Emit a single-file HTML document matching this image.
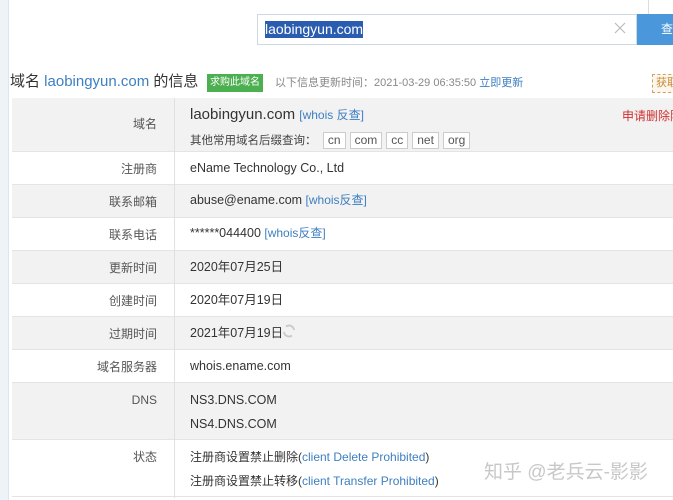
<!DOCTYPE html>
<html><head><meta charset="utf-8"><style>
*{margin:0;padding:0;box-sizing:border-box}
body{width:673px;height:500px;overflow:hidden;background:#fff;font-family:"Liberation Sans","Noto Sans CJK SC",sans-serif;position:relative;color:#333}
.a{position:absolute;white-space:nowrap}
span{line-height:16px}
.lnk{color:#3d7fc1}
.row{position:absolute;left:12px;width:661px;border-bottom:1px solid #e4e4e4}
.g{background:#f2f2f2}
.lab{position:absolute;right:516px;font-size:12px;color:#555}
.val{position:absolute;left:178px;font-size:12.5px;color:#333}
.sep{position:absolute;left:174px;top:98px;width:1px;height:400px;background:#e0e0e0}
.tag{display:inline-block;border:1px solid #ccc;background:#fff;padding:0 4px;height:17px;line-height:15px;margin-right:4px;font-size:12px;color:#555}
</style></head><body>
<div class="a" style="left:0;top:0;width:9px;height:500px;background:#eef3f8;border-right:1px solid #dde5ee"></div>
<div class="a" style="left:648px;top:0;width:30px;height:16px;border:1px solid #ddd;border-top:none;background:#fff"></div>
<div class="a" style="left:257px;top:14px;width:380px;height:31px;border:1px solid #cfd8e0;background:#fff"></div>
<div class="a" style="left:265px;top:21px;font-size:14px;line-height:17px;background:#2a5db0;color:#fff">laobingyun.com</div>
<svg class="a" style="left:614px;top:22px" width="12" height="12"><path d="M1 1L11 11M11 1L1 11" stroke="#bbb" stroke-width="1.2"/></svg>
<div class="a" style="left:637px;top:14px;width:36px;height:31px;background:#4a97dc;color:#fff;font-size:12px;line-height:31px;padding-left:24px;overflow:hidden">查</div>
<div class="a" style="left:10px;top:73px;font-size:15px;line-height:18px;color:#333">域名 <span class="lnk" style="line-height:18px">laobingyun.com</span> 的信息</div>
<div class="a" style="left:207px;top:74px;width:56px;height:18px;background:#4caf50;color:#fff;font-size:10px;line-height:18px;text-align:center">求购此域名</div>
<div class="a" style="left:275px;top:76px;font-size:11px;line-height:14px;color:#888">以下信息更新时间：2021-03-29 06:35:50 <span class="lnk" style="line-height:14px">立即更新</span></div>
<div class="a" style="left:652px;top:74px;width:30px;height:19px;border:1px dashed #c9a36a;background:#fdf6ea;color:#c68a3a;font-size:11px;line-height:17px;padding-left:3px">获取</div>

<div class="row g" style="top:98px;height:54px"><span class="lab" style="top:18px">域名</span>
<span class="val" style="top:8px;font-size:15px;line-height:18px">laobingyun.com <span class="lnk" style="font-size:12px">[whois 反查]</span></span>
<span class="val" style="top:34px;font-size:11.5px;color:#444">其他常用域名后缀查询： &nbsp;<span class="tag">cn</span><span class="tag">com</span><span class="tag">cc</span><span class="tag">net</span><span class="tag">org</span></span>
<span class="a" style="left:610px;top:10px;font-size:12px;color:#d03030">申请删除隐私</span></div>
<div class="row" style="top:152px;height:33px"><span class="lab" style="top:9px">注册商</span><span class="val" style="top:8px">eName Technology Co., Ltd</span></div>
<div class="row g" style="top:185px;height:33px"><span class="lab" style="top:9px">联系邮箱</span><span class="val" style="top:7px">abuse@ename.com <span class="lnk" style="font-size:12px">[whois反查]</span></span></div>
<div class="row" style="top:218px;height:33px"><span class="lab" style="top:9px">联系电话</span><span class="val" style="top:7px">******044400 <span class="lnk" style="font-size:12px">[whois反查]</span></span></div>
<div class="row g" style="top:251px;height:33px"><span class="lab" style="top:9px">更新时间</span><span class="val" style="top:8px">2020年07月25日</span></div>
<div class="row" style="top:284px;height:33px"><span class="lab" style="top:9px">创建时间</span><span class="val" style="top:8px">2020年07月19日</span></div>
<div class="row g" style="top:317px;height:33px"><span class="lab" style="top:9px">过期时间</span><span class="val" style="top:8px">2021年07月19日</span>
<svg class="a" style="left:270px;top:7px" width="14" height="14" viewBox="0 0 14 14"><path d="M4 2.5A5 5 0 0 1 12 6M10 11.5A5 5 0 0 1 2 8" stroke="#c8c8c8" stroke-width="1.8" fill="none"/></svg></div>
<div class="row" style="top:350px;height:33px"><span class="lab" style="top:9px">域名服务器</span><span class="val" style="top:8px">whois.ename.com</span></div>
<div class="row g" style="top:383px;height:57px"><span class="lab" style="top:9px">DNS</span><span class="val" style="top:9px">NS3.DNS.COM</span><span class="val" style="top:33px">NS4.DNS.COM</span></div>
<div class="row" style="top:440px;height:57px"><span class="lab" style="top:9px">状态</span><span class="val" style="top:9px;font-size:12px">注册商设置禁止删除(<span class="lnk">client Delete Prohibited</span>)</span><span class="val" style="top:33px;font-size:12px">注册商设置禁止转移(<span class="lnk">client Transfer Prohibited</span>)</span></div>
<div class="sep"></div>
<div class="a" style="left:484px;top:457px;font-size:19px;color:#c8c8c8">知乎 @老兵云-影影</div>
</body></html>
